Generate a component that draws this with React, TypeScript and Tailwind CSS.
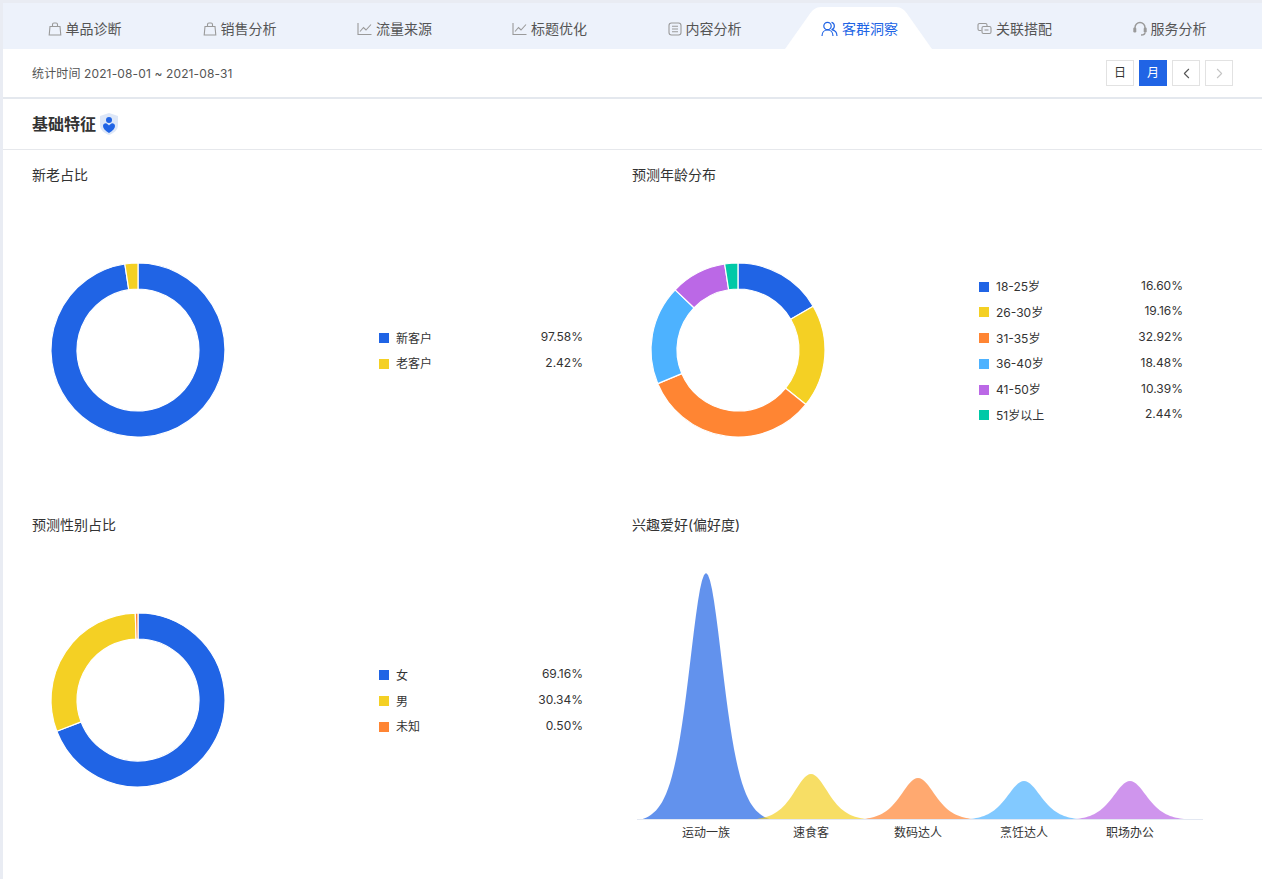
import React from 'react';
import { ChevronLeft, ChevronRight } from 'lucide-react';

const BLUE = '#2064e5';
const YELLOW = '#f4d024';
const ORANGE = '#ff8533';
const SKY = '#4db2ff';
const PURPLE = '#bb68e6';
const TEAL = '#00c9a7';

type Item = { name: string; value: number; color: string };

const oldNew: Item[] = [
    { name: '新客户', value: 97.58, color: BLUE },
    { name: '老客户', value: 2.42, color: YELLOW },
];
const ages: Item[] = [
    { name: '18-25岁', value: 16.6, color: BLUE },
    { name: '26-30岁', value: 19.16, color: YELLOW },
    { name: '31-35岁', value: 32.92, color: ORANGE },
    { name: '36-40岁', value: 18.48, color: SKY },
    { name: '41-50岁', value: 10.39, color: PURPLE },
    { name: '51岁以上', value: 2.44, color: TEAL },
];
const genders: Item[] = [
    { name: '女', value: 69.16, color: BLUE },
    { name: '男', value: 30.34, color: YELLOW },
    { name: '未知', value: 0.5, color: ORANGE },
];
const interests = [
    { name: '运动一族', x: 706, peak: 573, color: BLUE },
    { name: '速食客', x: 811, peak: 774, color: YELLOW },
    { name: '数码达人', x: 918, peak: 778, color: ORANGE },
    { name: '烹饪达人', x: 1024, peak: 781, color: SKY },
    { name: '职场办公', x: 1130, peak: 781, color: PURPLE },
];

const TabIcon = ({ kind }: { kind: string }) => {
    const stroke = '#9a9a9a';
    if (kind === 'bag') {
        return (
            <svg width="14" height="14" viewBox="0 0 14 14" fill="none" stroke={stroke} strokeWidth="1.1">
                <path d="M2 4.500h10l.8 8.500H1.200z" />
                <path d="M4.500 4.500V2.500a1.500 1.500 0 0 1 1.500-1.500h2a1.500 1.500 0 0 1 1.500 1.500v2" />
            </svg>
        );
    }
    if (kind === 'chart') {
        return (
            <svg width="15" height="14" viewBox="0 0 15 14" fill="none" stroke={stroke} strokeWidth="1.1">
                <path d="M1 1v11.500h13.500" />
                <path d="M3 9.500 6.500 5.500 9 8l5-5.500" />
            </svg>
        );
    }
    if (kind === 'list') {
        return (
            <svg width="14" height="14" viewBox="0 0 14 14" fill="none" stroke={stroke} strokeWidth="1.1">
                <rect x="1" y="1" width="12" height="12" rx="2.500" />
                <path d="M4 4.200h6M4 7h6M4 9.800h6" />
            </svg>
        );
    }
    if (kind === 'users') {
        return (
            <svg width="17" height="16" viewBox="0 0 17 16" fill="none" stroke={BLUE} strokeWidth="1.200">
                <circle cx="6.500" cy="5" r="3.700" />
                <path d="M1 15c0-3.500 2.300-6 5.500-6s5.500 2.500 5.500 6" />
                <path d="M10.500 1.400a3.700 3.700 0 0 1 0 7.200c3.300.5 5.500 3 5.500 6.400" />
            </svg>
        );
    }
    if (kind === 'link') {
        return (
            <svg width="15" height="14" viewBox="0 0 15 14" fill="none" stroke={stroke} strokeWidth="1.100">
                <path d="M4.500 8.500h-2a1.500 1.500 0 0 1-1.500-1.500V3a1.500 1.500 0 0 1 1.500-1.500h6A1.500 1.500 0 0 1 10 3v1.500" />
                <rect x="5" y="4.500" width="9" height="7" rx="1.500" />
                <path d="M7.500 8h4" />
            </svg>
        );
    }
    return (
        <svg width="14" height="15" viewBox="0 0 14 15" fill="none" stroke={stroke} strokeWidth="1.400">
            <path d="M2 8V6.500a5 5 0 0 1 10 0V8" />
            <rect x="0.300" y="6.500" width="3" height="5" rx="1.200" fill={stroke} stroke="none" />
            <rect x="10.700" y="6.500" width="3" height="5" rx="1.200" fill={stroke} stroke="none" />
            <path d="M12 11.500c0 1.500-1.500 2.500-4 2.500" />
        </svg>
    );
};

const tabs = [
    { label: '单品诊断', icon: 'bag' },
    { label: '销售分析', icon: 'bag' },
    { label: '流量来源', icon: 'chart' },
    { label: '标题优化', icon: 'chart' },
    { label: '内容分析', icon: 'list' },
    { label: '客群洞察', icon: 'users', active: true },
    { label: '关联搭配', icon: 'link' },
    { label: '服务分析', icon: 'headset' },
];

const polar = (r: number, pct: number) => {
    const a = (pct / 100) * 2 * Math.PI;
    return `${(100 + r * Math.sin(a)).toFixed(2)} ${(100 - r * Math.cos(a)).toFixed(2)}`;
};

const Donut = ({ data }: { data: Item[] }) => {
    let start = 0;
    return (
        <svg width="200" height="200" viewBox="0 0 200 200" className="shrink-0">
            {data.map(d => {
                const end = start + d.value;
                const large = d.value > 50 ? 1 : 0;
                const path = `M${polar(87, start)}A87 87 0 ${large} 1 ${polar(87, end)}L${polar(61, end)}A61 61 0 ${large} 0 ${polar(61, start)}Z`;
                start = end;
                return <path key={d.name} d={path} fill={d.color} stroke="#ffffff" strokeWidth="1.200" strokeLinejoin="round" />;
            })}
        </svg>
    );
};

const Legend = ({ data }: { data: Item[] }) => (
    <div className="flex flex-col gap-[5.8px] mt-[3px] text-[12px] leading-[20px] text-[#333]">
        {data.map(d => (
            <div key={d.name} className="flex items-center h-[20px]">
                <span className="w-[10px] h-[10px] mr-[7px]" style={{ backgroundColor: d.color }} />
                <span className="w-[109px] pt-[1px]">{d.name}</span>
                <span className="w-[78px] text-right -mt-[2px]">{d.value.toFixed(2)}%</span>
            </div>
        ))}
    </div>
);

const PieCard = ({ title, data }: { title: string; data: Item[] }) => (
    <div className="h-[350px]">
        <h3 className="pl-[29px] pt-[15px] text-[14px] leading-[20px] text-[#333]">{title}</h3>
        <div className="flex items-center h-[315px] pt-[14px] pl-[34.5px]">
            <Donut data={data} />
            <div className="ml-[141.5px]">
                <Legend data={data} />
            </div>
        </div>
    </div>
);

// one peak of the ridge chart, x and y in page pixels
const ridgePath = (x: number, peak: number) => {
    const base = 820;
    const s = 23;
    const c = 0.012;
    const pts: string[] = [];
    for (let dx = -72; dx <= 72; dx += 2) {
        const sech = 1 / Math.cosh(dx / s);
        const h = Math.max(0, (sech * sech - c) / (1 - c));
        pts.push(`${x + dx} ${(base - (base - peak) * h).toFixed(2)}`);
    }
    return `M${x - 72} ${base}L${pts.join('L')}L${x + 72} ${base}Z`;
};

const InterestCard = () => (
    <div className="h-[350px] pl-[29px]">
        <h3 className="pt-[15px] text-[14px] leading-[20px] text-[#333]">兴趣爱好(偏好度)</h3>
        <div className="mt-[33px] w-[590px] h-[252px]">
            <svg width="590" height="252" viewBox="632 568 590 252" className="block">
                {interests.map(i => (
                    <path key={i.name} d={ridgePath(i.x, i.peak)} fill={i.color} fillOpacity="0.7" />
                ))}
                <path d="M637 819.500H1203" stroke="#e3e8f2" strokeWidth="1" />
            </svg>
        </div>
        <div className="relative w-[590px] h-[20px] mt-[3px] text-[12px] leading-[20px] text-[#333]">
            {interests.map(i => (
                <span key={i.name} className="absolute top-0 -translate-x-1/2" style={{ left: i.x - 632 }}>{i.name}</span>
            ))}
        </div>
    </div>
);

const App: React.FC = () => {
    return (
        <div
            className="w-[1262px] h-[879px] overflow-hidden bg-white border-l-[3px] border-t-[3px] border-[#e9ecf3]"
            style={{ fontFamily: 'Inter, "Noto Sans CJK SC", sans-serif' }}
        >
            <div className="flex h-[46px] bg-[#edf2fb] pl-[4px] pr-[15px]">
                {tabs.map(tab => (
                    <div key={tab.label} className="relative flex-1 flex items-center justify-center pt-[5px] text-[14px]">
                        {tab.active && (
                            <svg className="absolute left-[3px] top-[4px]" width="147" height="42" viewBox="0 0 147 42">
                                <path d="M0 42L24 8C27 3 31 0 36 0H111C116 0 120 3 123 8L147 42Z" fill="#ffffff" />
                            </svg>
                        )}
                        <span className="relative flex items-center justify-center gap-[4px]">
                            <TabIcon kind={tab.icon} />
                            <span className={tab.active ? 'text-[#2064e5]' : 'text-[#555]'}>{tab.label}</span>
                        </span>
                    </div>
                ))}
            </div>

            <div className="flex items-center justify-between h-[48px] pl-[29px] pr-[29px] border-b-2 border-[#e4e8ee] box-content">
                <span className="pt-[1px] text-[12px] tracking-[0.13px] text-[#555]">统计时间 2021-08-01 ~ 2021-08-31</span>
                <div className="flex gap-[5px] text-[12px]">
                    <button className="w-[28px] h-[26px] border border-[#e2e2e2] text-[#333] flex items-center justify-center">日</button>
                    <button className="w-[28px] h-[26px] bg-[#2064e5] text-white flex items-center justify-center">月</button>
                    <button className="w-[28px] h-[26px] border border-[#e2e2e2] text-[#555] flex items-center justify-center">
                        <ChevronLeft size={17} strokeWidth={1.5} />
                    </button>
                    <button className="w-[28px] h-[26px] border border-[#e2e2e2] text-[#c4c4c4] flex items-center justify-center">
                        <ChevronRight size={17} strokeWidth={1.5} />
                    </button>
                </div>
            </div>

            <div className="flex items-center h-[51px] pb-[1px] pl-[29px] border-b border-[#e6e8ec]">
                <h2 className="text-[16px] font-bold text-[#333]">基础特征</h2>
                <svg className="ml-[3px]" width="20" height="24" viewBox="0 0 20 24">
                    <path d="M10 1 19 4v9c0 5-4 8-9 10-5-2-9-5-9-10V4z" fill="#dde7f8" />
                    <circle cx="10" cy="8" r="3" fill="#2064e5" />
                    <path d="M10 21C6 18.500 4 16.500 4 14C4 12 6 11 7.500 11.500C8.500 12 9.500 12.800 10 13.500C10.500 12.800 11.500 12 12.500 11.500C14 11 16 12 16 14C16 16.500 14 18.500 10 21Z" fill="#2064e5" />
                </svg>
            </div>

            <div className="grid grid-cols-[600px_1fr]">
                <PieCard title="新老占比" data={oldNew} />
                <PieCard title="预测年龄分布" data={ages} />
                <PieCard title="预测性别占比" data={genders} />
                <InterestCard />
            </div>
        </div>
    );
};

export default App;
